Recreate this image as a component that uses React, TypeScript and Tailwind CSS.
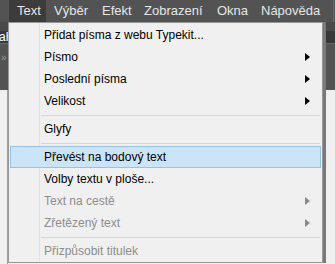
import React from "react";

type Item =
  | { kind: "sep" }
  | { kind: "item"; label: string; sub?: boolean; disabled?: boolean; active?: boolean };

const MENU_BAR = [
  { label: "Text", w: "w-[37px]" },
  { label: "Výběr", w: "w-[48px]" },
  { label: "Efekt", w: "w-[42px]" },
  { label: "Zobrazení", w: "w-[73px]" },
  { label: "Okna", w: "w-[44px]" },
  { label: "Nápověda", w: "w-[70px]" },
];

const ITEMS: Item[] = [
  { kind: "item", label: "Přidat písma z webu Typekit..." },
  { kind: "item", label: "Písmo", sub: true },
  { kind: "item", label: "Poslední písma", sub: true },
  { kind: "item", label: "Velikost", sub: true },
  { kind: "sep" },
  { kind: "item", label: "Glyfy" },
  { kind: "sep" },
  { kind: "item", label: "Převést na bodový text", active: true },
  { kind: "item", label: "Volby textu v ploše..." },
  { kind: "item", label: "Text na cestě", sub: true, disabled: true },
  { kind: "item", label: "Zřetězený text", sub: true, disabled: true },
  { kind: "sep" },
  { kind: "item", label: "Přizpůsobit titulek", disabled: true },
];

function Arrow({ disabled }: { disabled?: boolean }) {
  return (
    <svg width="5" height="8" viewBox="0 0 5 8" className="ml-auto mr-[10px]">
      <path d="M0 0 L5 4 L0 8 Z" fill={disabled ? "#8a8a8a" : "#000"} />
    </svg>
  );
}

export default function App() {
  return (
    <div
      className="relative h-[264px] w-[335px] overflow-hidden bg-[#f0f0f0]"
      style={{ fontFamily: '"Liberation Sans", Arial, sans-serif' }}
    >
      {/* menu bar */}
      <div className="flex h-[22px] items-stretch bg-[#535353] pl-[9px] text-[13px] text-[#e6e6e6]">
        {MENU_BAR.map((m, i) => (
          <div
            key={m.label}
            className={`flex items-center whitespace-nowrap pl-[8px] ${m.w} ${i === 0 ? "bg-[#3c3c3c]" : ""}`}
          >
            {m.label}
          </div>
        ))}
        <div className="ml-auto mr-[1px] w-px bg-[#6a6a6a]" />
      </div>

      {/* app background behind the menu */}
      <div className="flex h-[68px] flex-col bg-[#535353]">
        <div className="h-[9px] bg-[#4a4a4a]" />
        <div className="flex h-[13px] items-center border-b border-[#6a6a6a] bg-[#383838] text-[12px] leading-none text-white">
          <span className="-ml-[1px]">ah</span>
        </div>
        <div className="pl-[1px] pt-[9px] text-[10px] leading-none text-[#9a9a9a]">»</div>
      </div>
      <div className="ml-[7px] h-[174px] border-l border-[#a0a0a0]" />

      {/* dropdown */}
      <div className="absolute left-[8px] top-[22px] w-[315px] border border-[#979797] bg-[#f0f0f0] pt-[1px] text-[12px] text-black shadow-[3px_0_0_#7a7a7a]">
        <div className="absolute bottom-0 left-[30px] top-0 w-px bg-[#e2e3e3]" />
        {ITEMS.map((it, i) =>
          it.kind === "sep" ? (
            <div key={i} className="flex h-[6px] items-center pl-[32px] pr-[2px]">
              <div className="h-px w-full bg-[#d7d7d7]" />
            </div>
          ) : (
            <div
              key={i}
              className={`relative mx-[1px] flex h-[22px] items-center border pl-[33px] ${
                it.active ? "border-[#99c1e6] bg-[#cce4f7]" : "border-transparent"
              } ${it.disabled ? "text-[#8d8d8d]" : ""}`}
            >
              <span>{it.label}</span>
              {it.sub && <Arrow disabled={it.disabled} />}
            </div>
          )
        )}
      </div>
    </div>
  );
}
